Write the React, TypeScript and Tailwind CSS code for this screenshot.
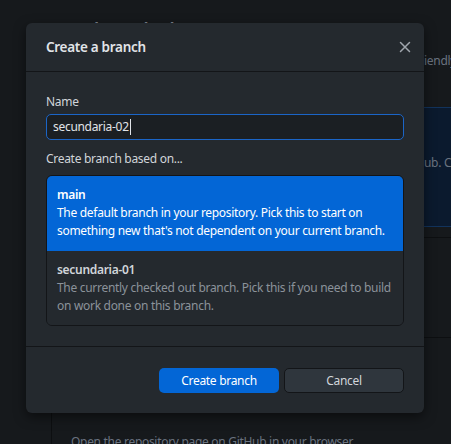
import React from "react";

export default function App() {
  const font = { fontFamily: '"Noto Sans", "Open Sans", sans-serif' };
  return (
    <div className="relative w-[451px] h-[444px] overflow-hidden bg-[#16191c]" style={font}>
      {/* background app content (dimmed) */}
      <div className="absolute left-[51px] top-0 right-0 bottom-0">
        <div className="pt-[14px] text-[26px] leading-[34px] text-[#7d8590]">No local changes</div>
        <div className="absolute left-[373px] top-[52px] text-[12px] tracking-[-0.3px] text-[#6a7380] whitespace-nowrap">iendly</div>
        <div className="absolute left-[360px] top-[107px] w-[120px] h-[120px] bg-[#0b1a2e] border border-[#12335c]">
          <div className="absolute left-[12px] top-[46px] text-[12px] tracking-[-0.3px] text-[#6a7380] whitespace-nowrap">ub. C</div>
        </div>
        <div className="absolute left-[360px] top-[237px] w-[100px] border-t border-[#0d0f11]" />
        <div className="absolute left-[360px] top-[337px] w-[100px] border-t border-[#0d0f11]" />
        <div className="absolute left-0 top-[400px] bottom-0 border-l border-[#0d0f11]" />
        <div className="absolute left-[20px] top-[433px] text-[12px] tracking-[-0.3px] text-[#6a7380] whitespace-nowrap">Open the repository page on GitHub in your browser</div>
      </div>

      {/* dialog */}
      <div className="absolute left-[26px] top-[23px] w-[398px] rounded-[6px] bg-[#24292e] shadow-[0_4px_12px_rgba(0,0,0,0.5)] flex flex-col tracking-[-0.3px]">
        <div className="h-[49px] flex items-center justify-between pl-[20px] pr-[12px] border-b border-[#131518]">
          <span className="text-[13.5px] font-semibold text-[#e1e4e8]">Create a branch</span>
          <svg width="12" height="12" viewBox="0 0 12 12" className="mr-[1px]">
            <path d="M1.5 1.5 L10.5 10.5 M10.5 1.5 L1.5 10.5" stroke="#a0a6ad" strokeWidth="1.5" strokeLinecap="round" />
          </svg>
        </div>
        <div className="px-[20px] pt-[22px] pb-[20px] border-b border-[#131518] flex flex-col">
          <label className="text-[12px] leading-[16px] text-[#d1d5da]">Name</label>
          <div className="mt-[4px] h-[26px] rounded-[5px] border border-[#1b65c7] bg-[#1b1f23] flex items-center px-[6px] text-[12px] text-[#e1e4e8]">
            secundaria-02<span className="w-px h-[16px] bg-[#e1e4e8] ml-[1px]" />
          </div>
          <div className="mt-[11px] text-[12px] leading-[16px] text-[#d1d5da]">Create branch based on...</div>
          <div className="mt-[8px] rounded-[6px] border border-[#131518] overflow-hidden flex flex-col">
            <div className="bg-[#0366d6] px-[10px] pt-[10px] pb-[11px] text-[12px] leading-[18px] text-white">
              <div className="font-semibold">main</div>
              <div>The default branch in your repository. Pick this to start on something new that's not dependent on your current branch.</div>
            </div>
            <div className="bg-[#24292e] px-[10px] pt-[10px] pb-[10px] text-[12px] leading-[18px]">
              <div className="font-semibold text-[#d1d5da]">secundaria-01</div>
              <div className="text-[#8b929a]">The currently checked out branch. Pick this if you need to build on work done on this branch.</div>
            </div>
          </div>
        </div>
        <div className="px-[20px] pt-[21px] pb-[20px] flex justify-end gap-[5px]">
          <button className="w-[120px] h-[25px] rounded-[5px] bg-[#0366d6] text-white text-[12px]">Create branch</button>
          <button className="w-[120px] h-[25px] rounded-[5px] bg-[#2f363d] border border-[#131518] text-[#d1d5da] text-[12px]">Cancel</button>
        </div>
      </div>
    </div>
  );
}
